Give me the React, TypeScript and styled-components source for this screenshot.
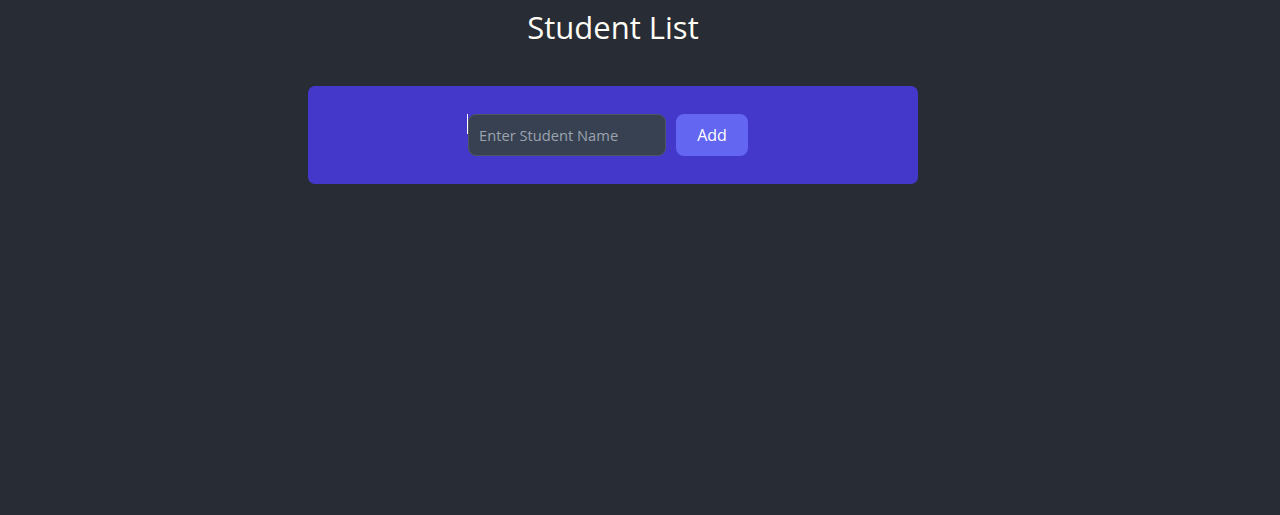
import styled, { createGlobalStyle } from 'styled-components'

const GlobalStyle = createGlobalStyle`
  html, body {
    margin: 0;
    padding: 0;
    background: #282c34;
    font-family: "Open Sans", "Noto Sans", Arial, sans-serif;
  }
`

const Page = styled.div`
  width: 1226px;
  min-height: 515px;
  display: flex;
  flex-direction: column;
  align-items: center;
  background: #282c34;
  color: #ffffff;
`

const Title = styled.h1`
  margin: 7px 0 0;
  height: 79px;
  font-size: 31px;
  font-weight: 400;
  line-height: 40px;
  color: #fffdf5;
`

const Panel = styled.div`
  width: 610px;
  height: 98px;
  box-sizing: border-box;
  background: #4338ca;
  border-radius: 7px;
  display: flex;
  align-items: center;
  justify-content: center;
  padding-right: 11px;
`

const Form = styled.form`
  display: flex;
  align-items: flex-start;
`

const Caret = styled.span`
  width: 1px;
  height: 20px;
  background: #ffffff;
`

const NameInput = styled.input`
  width: 198px;
  height: 42px;
  box-sizing: border-box;
  padding: 0 10px;
  background: #374151;
  border: 1px solid #4b5563;
  border-radius: 8px;
  color: #e5e7eb;
  font-family: inherit;
  font-size: 14.7px;
  outline: none;

  &::placeholder {
    color: #9ca3af;
  }
`

const AddButton = styled.button`
  margin-left: 10px;
  width: 72px;
  height: 42px;
  background: #6366f1;
  border: none;
  border-radius: 8px;
  color: #ffffff;
  font-family: inherit;
  font-size: 16px;
  cursor: pointer;
`

export default function App() {
  return (
    <>
      <GlobalStyle />
      <Page>
        <Title>Student List</Title>
        <Panel>
          <Form onSubmit={(e) => e.preventDefault()}>
            <Caret />
            <NameInput placeholder="Enter Student Name" />
            <AddButton type="submit">Add</AddButton>
          </Form>
        </Panel>
      </Page>
    </>
  )
}
